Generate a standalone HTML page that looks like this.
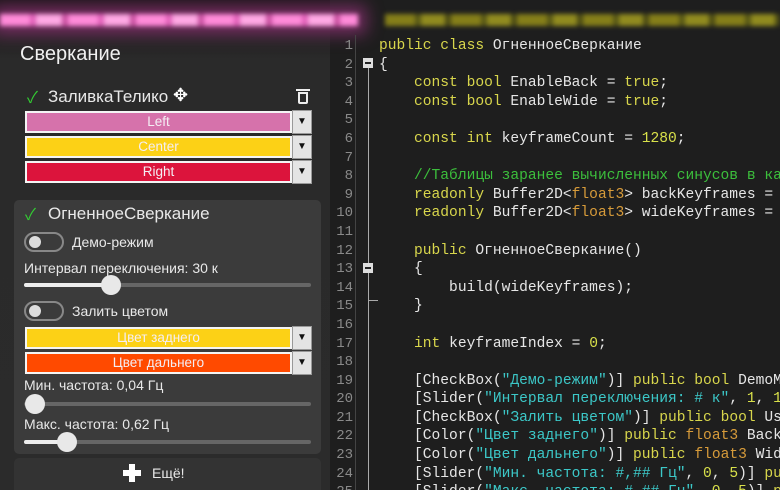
<!DOCTYPE html>
<html><head><meta charset="utf-8"><style>
*{margin:0;padding:0;box-sizing:border-box}
html,body{overflow:hidden}
body{width:780px;height:490px;background:#1e1e1e;font-family:"Liberation Sans","Noto Sans CJK SC",sans-serif;position:relative;color:#eee}
.a{position:absolute}
#left{left:0;top:0;width:330px;height:490px;background:linear-gradient(#1a1718,#2a2a2a 60px,#2b2b2b)}
.band{position:absolute;height:12px;top:14px;filter:blur(2.5px)}
.t{font-size:14px;color:#e8e8e8;white-space:nowrap}
.cbox{position:absolute;height:22px;border:2px solid #f4f4f4;text-align:center;font-size:13.5px;line-height:18px;color:#f4eef4}
.dd{position:absolute;width:20px;height:24px;background:#e4e4e4;border:1px solid #999;font-size:10px;color:#111;text-align:center;line-height:22px}
.tog{position:absolute;width:40px;height:20px;border:2px solid #888;border-radius:10px}
.tog:after{content:"";position:absolute;left:3px;top:2px;width:12px;height:12px;border-radius:50%;background:#ddd}
.track{position:absolute;height:4px;background:#666;border-radius:2px}
.fill{position:absolute;height:4px;background:#eee;border-radius:2px}
.knob{position:absolute;width:20px;height:20px;border-radius:50%;background:#e8e8e8}
#code{position:absolute;left:379px;top:37px;font-family:"Liberation Mono",monospace;font-size:14.6px;line-height:18.6px;color:#e6e6e6;white-space:pre}
#ln{position:absolute;left:330px;top:37px;width:23px;text-align:right;font-family:"Liberation Mono",monospace;font-size:14px;line-height:18.6px;color:#8a8a8a;white-space:pre}
.k{color:#d8d64c}.f{color:#d79b3a}.s{color:#3cc8c8}.c{color:#3cbf3c}.n{color:#d8e04a}
.fold{position:absolute;width:10px;height:10px;background:#ddd;left:363px}
.fold:after{content:"";position:absolute;left:2px;top:4px;width:6px;height:2px;background:#222}
</style></head><body>
<div id="left" class="a"></div>
<div class="band" style="left:0;width:358px;background:repeating-linear-gradient(90deg,#ff8ad9 0 30px,#e060b8 30px 36px,#ffa8e4 36px 62px,#c850a0 62px 68px);box-shadow:0 0 16px 8px rgba(210,60,170,.5)"></div>
<div class="band" style="left:385px;width:395px;background:repeating-linear-gradient(90deg,#a89f18 0 30px,#6a6a14 30px 36px,#b8b020 36px 60px,#5a5a12 60px 66px);opacity:.75"></div>

<div class="a" style="left:20px;top:43px;font-size:20px;color:#f0f0f0">Сверкание</div>
<div class="a" style="left:27px;top:84px;color:#3c3;font-size:16px">✓</div>
<div class="a t" style="left:48px;top:87px;font-size:17px">ЗаливкаТелико</div>
<div class="a" style="left:173px;top:85px;font-size:18px;color:#fff">✥</div>
<div class="a" style="left:296px;top:89px;width:14px;height:2px;background:#eee"></div>
<div class="a" style="left:298px;top:92px;width:10px;height:12px;border:2px solid #eee;border-radius:0 0 2px 2px"></div>

<div class="cbox" style="left:25px;top:111px;width:267px;background:#d672ab">Left</div>
<div class="dd" style="left:292px;top:110px">▼</div>
<div class="cbox" style="left:25px;top:136px;width:267px;background:#fcd116">Center</div>
<div class="dd" style="left:292px;top:135px">▼</div>
<div class="cbox" style="left:25px;top:161px;width:267px;background:#dc143c">Right</div>
<div class="dd" style="left:292px;top:160px">▼</div>

<div class="a" style="left:14px;top:200px;width:307px;height:254px;background:#3b3b3b;border-radius:5px"></div>
<div class="a" style="left:25px;top:201px;color:#3c3;font-size:16px">✓</div>
<div class="a t" style="left:48px;top:204px;font-size:17px">ОгненноеСверкание</div>
<div class="tog" style="left:24px;top:232px"></div>
<div class="a t" style="left:72px;top:234px">Демо-режим</div>
<div class="a t" style="left:24px;top:260px">Интервал переключения: 30 к</div>
<div class="track" style="left:24px;top:283px;width:287px"></div>
<div class="fill" style="left:24px;top:283px;width:88px"></div>
<div class="knob" style="left:101px;top:275px"></div>
<div class="tog" style="left:24px;top:301px"></div>
<div class="a t" style="left:72px;top:303px">Залить цветом</div>
<div class="cbox" style="left:25px;top:327px;width:267px;background:#fcd116">Цвет заднего</div>
<div class="dd" style="left:292px;top:326px">▼</div>
<div class="cbox" style="left:25px;top:352px;width:267px;background:#ff4a00">Цвет дальнего</div>
<div class="dd" style="left:292px;top:351px">▼</div>
<div class="a t" style="left:24px;top:377px">Мин. частота: 0,04 Гц</div>
<div class="track" style="left:24px;top:402px;width:287px"></div>
<div class="knob" style="left:25px;top:394px"></div>
<div class="a t" style="left:24px;top:416px">Макс. частота: 0,62 Гц</div>
<div class="track" style="left:24px;top:440px;width:287px"></div>
<div class="fill" style="left:24px;top:440px;width:42px"></div>
<div class="knob" style="left:57px;top:432px"></div>

<div class="a" style="left:14px;top:458px;width:307px;height:32px;background:#333;border-radius:5px 5px 0 0"></div>
<div class="a" style="left:123px;top:470px;width:18px;height:6px;background:#fff"></div>
<div class="a" style="left:129px;top:464px;width:6px;height:18px;background:#fff"></div>
<div class="a t" style="left:152px;top:465px">Ещё!</div>

<div id="ln">1
2
3
4
5
6
7
8
9
10
11
12
13
14
15
16
17
18
19
20
21
22
23
24
25</div>
<div class="a" style="left:355px;top:35px;width:1px;height:455px;background:#444"></div>
<div class="a" style="left:368px;top:68px;width:1px;height:422px;background:#aaa"></div>
<div class="fold" style="top:58px"></div>
<div class="fold" style="top:263px"></div>
<div class="a" style="left:369px;top:300px;width:9px;height:1px;background:#aaa"></div>
<div id="code"><span class="k">public class</span> ОгненноеСверкание
{
    <span class="k">const bool</span> EnableBack = <span class="k">true</span>;
    <span class="k">const bool</span> EnableWide = <span class="k">true</span>;

    <span class="k">const int</span> keyframeCount = <span class="n">1280</span>;

    <span class="c">//Таблицы заранее вычисленных синусов в ка</span>
    <span class="k">readonly</span> Buffer2D&lt;<span class="f">float3</span>&gt; backKeyframes =
    <span class="k">readonly</span> Buffer2D&lt;<span class="f">float3</span>&gt; wideKeyframes =

    <span class="k">public</span> ОгненноеСверкание()
    {
        build(wideKeyframes);
    }

    <span class="k">int</span> keyframeIndex = <span class="n">0</span>;

    [CheckBox(<span class="s">"Демо-режим"</span>)] <span class="k">public bool</span> DemoM
    [Slider(<span class="s">"Интервал переключения: # к"</span>, <span class="n">1</span>, <span class="n">1</span>
    [CheckBox(<span class="s">"Залить цветом"</span>)] <span class="k">public bool</span> Us
    [Color(<span class="s">"Цвет заднего"</span>)] <span class="k">public</span> <span class="f">float3</span> Back
    [Color(<span class="s">"Цвет дальнего"</span>)] <span class="k">public</span> <span class="f">float3</span> Wid
    [Slider(<span class="s">"Мин. частота: #,## Гц"</span>, <span class="n">0</span>, <span class="n">5</span>)] <span class="k">pu</span>
    [Slider(<span class="s">"Макс. частота: #,## Гц"</span>, <span class="n">0</span>, <span class="n">5</span>)] <span class="k">p</span></div>
</body></html>
